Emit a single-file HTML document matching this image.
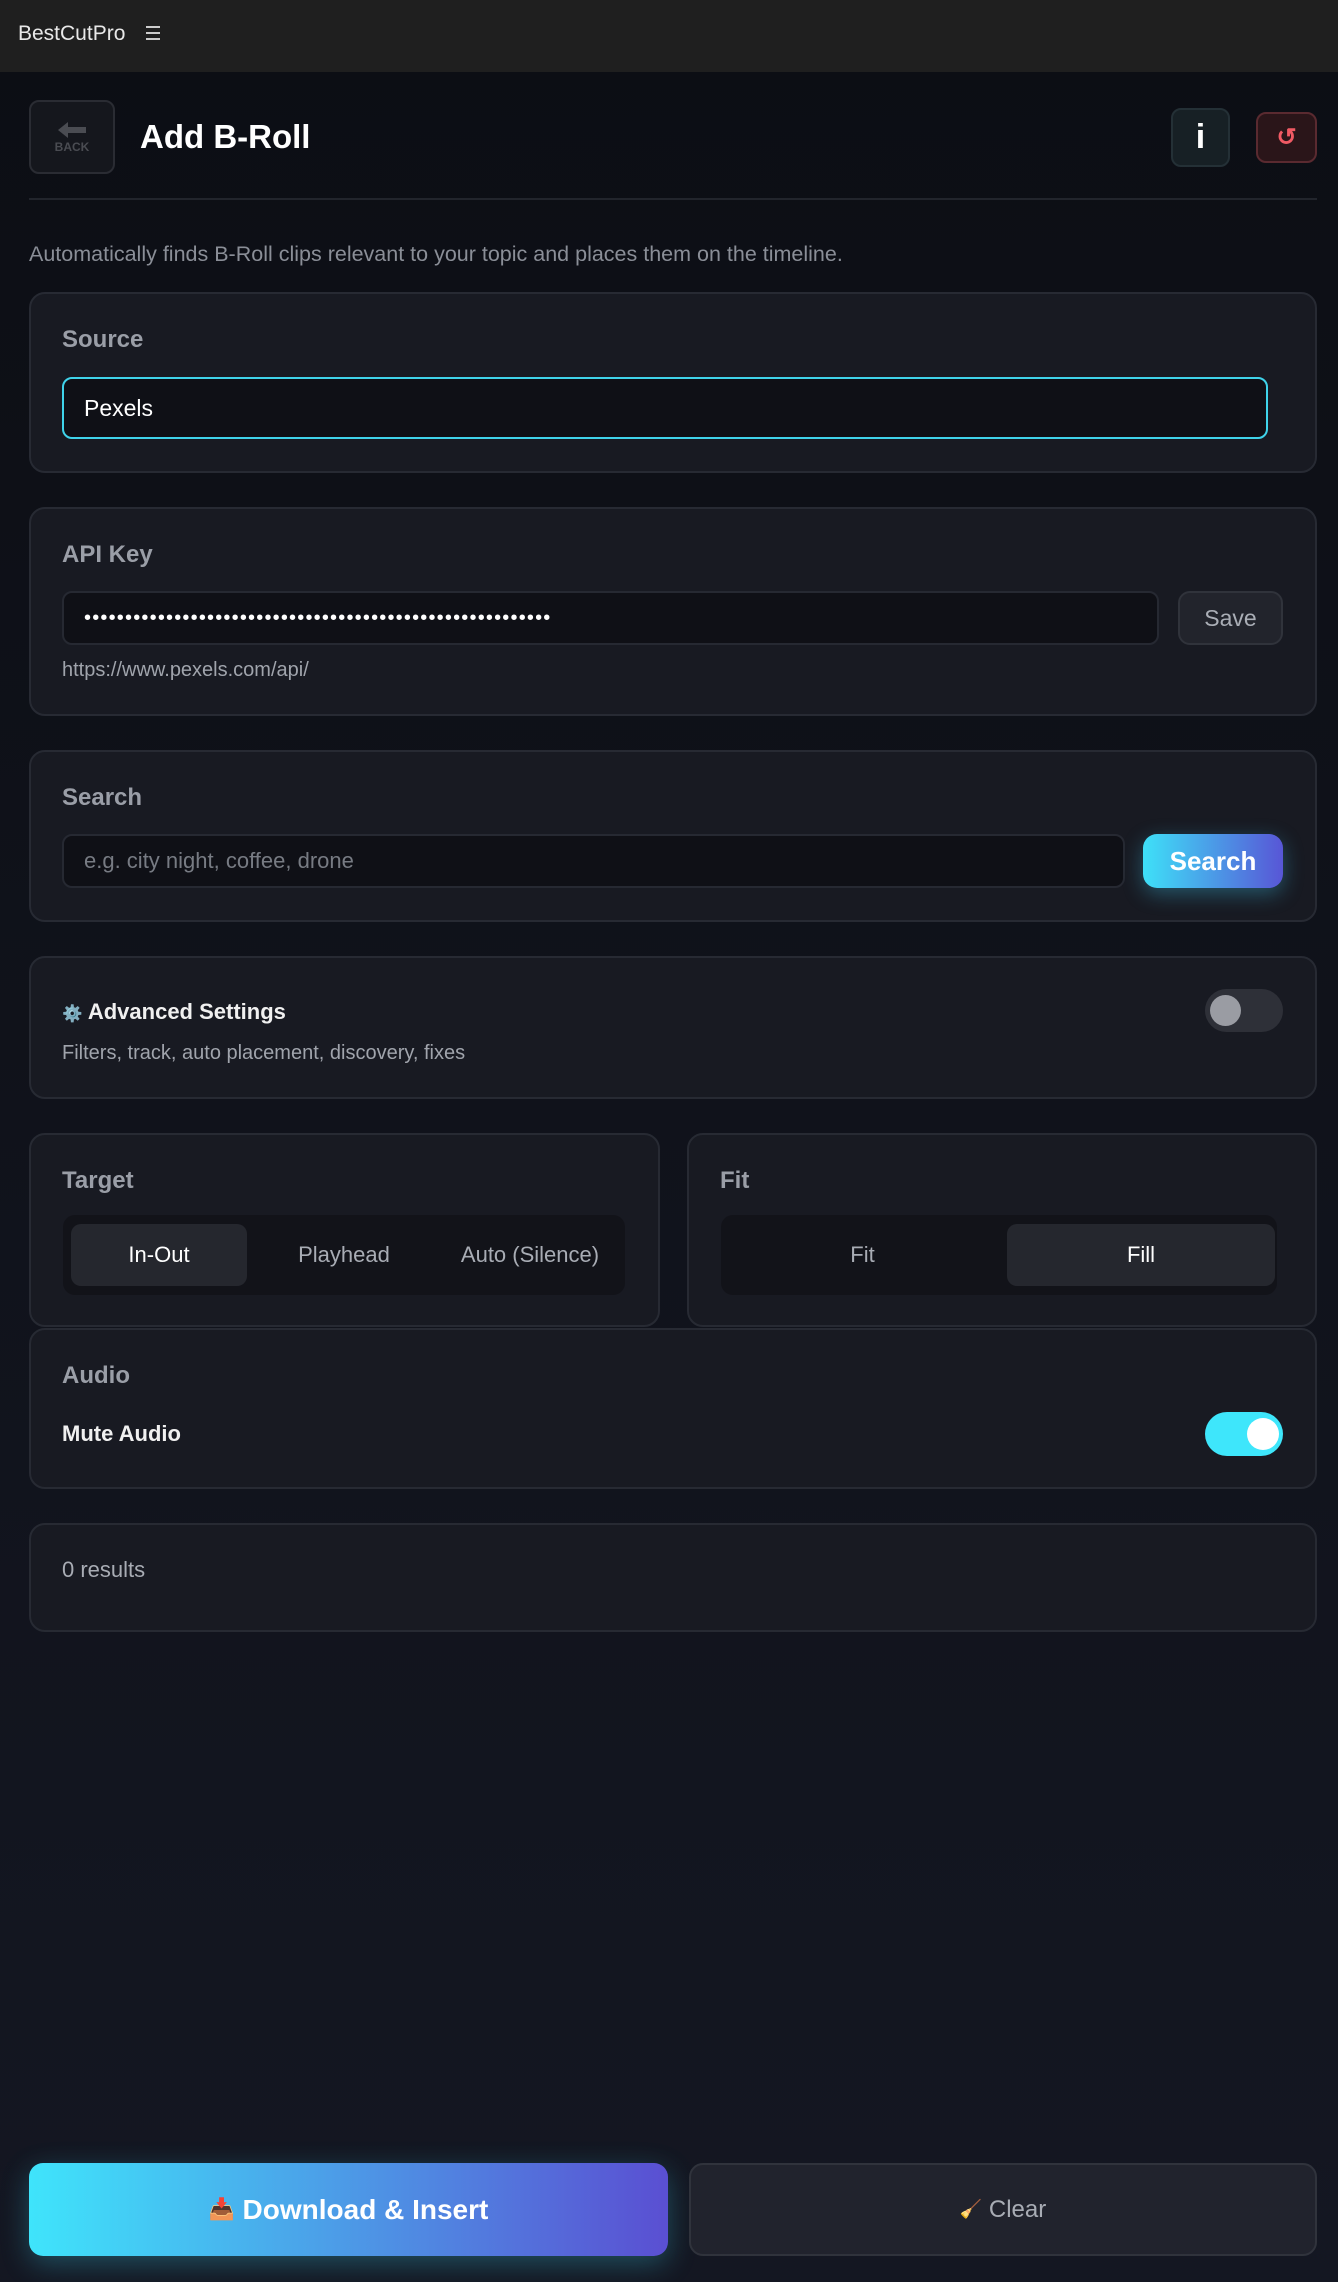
<!DOCTYPE html>
<html><head><meta charset="utf-8"><style>
*{box-sizing:border-box;margin:0;padding:0}
body{width:1338px;height:2282px;background:linear-gradient(#0c0e14,#141722);font-family:"Liberation Sans",sans-serif;position:relative;overflow:hidden;color:#fff}
.a{position:absolute}
.top{left:0;top:0;width:1338px;height:72px;background:#1f1f1f}
.card{position:absolute;background:#181a22;border:2px solid #272a33;border-radius:16px}
.lbl{position:absolute;color:#9a9ea7;font-size:24px;font-weight:bold;line-height:1}
.inp{position:absolute;background:#0f1016;border:2px solid #262932;border-radius:10px;font-size:22px;display:flex;align-items:center;padding-left:20px}
.fc{display:flex;align-items:center;justify-content:center}
.em{font-size:0.75em}
</style></head><body>
<div class="a top"></div>
<div class="a" style="left:18px;top:22px;font-size:21px;color:#e8e8e8">BestCutPro</div>
<div class="a" style="left:146px;top:26px;width:14px;height:14px;border-top:2px solid #ccc;border-bottom:2px solid #ccc"><div style="margin-top:4px;border-top:2px solid #ccc"></div></div>

<div class="a fc" style="left:29px;top:100px;width:86px;height:74px;border:2px solid #2a2c33;border-radius:10px;background:#15171d;flex-direction:column;color:#4a4c52;font-size:12px;font-weight:bold">
<svg width="32" height="20" viewBox="0 0 32 20"><path d="M2 10 L12 2 V7 H30 V13 H12 V18 Z" fill="#4a4c52"/></svg>BACK</div>
<div class="a" style="left:140px;top:118px;font-size:33px;font-weight:bold">Add B-Roll</div>
<div class="a fc" style="left:1171px;top:108px;width:59px;height:59px;background:#172025;border:2px solid #243036;border-radius:10px;font-size:34px;font-weight:bold">i</div>
<div class="a fc" style="left:1256px;top:112px;width:61px;height:51px;background:#2a1519;border:2px solid #5a2a30;border-radius:10px;color:#f05a64;font-size:24px;font-weight:bold">↺</div>
<div class="a" style="left:29px;top:198px;width:1288px;height:2px;background:#22252c"></div>
<div class="a" style="left:29px;top:242px;font-size:21.5px;color:#8a8e97">Automatically finds B-Roll clips relevant to your topic and places them on the timeline.</div>

<div class="card" style="left:29px;top:292px;width:1288px;height:181px"></div>
<div class="lbl" style="left:62px;top:328px">Source</div>
<div class="inp" style="left:62px;top:377px;width:1206px;height:62px;border-color:#3fd3ea;color:#fff;font-size:23px">Pexels</div>

<div class="card" style="left:29px;top:507px;width:1288px;height:209px"></div>
<div class="lbl" style="left:62px;top:543px">API Key</div>
<div class="inp" style="left:62px;top:591px;width:1097px;height:54px;color:#fff;font-size:20px;letter-spacing:1.2px">•••••••••••••••••••••••••••••••••••••••••••••••••••••••••</div>
<div class="a fc" style="left:1178px;top:591px;width:105px;height:54px;background:#22242c;border:2px solid #30333b;border-radius:12px;color:#aaaeb6;font-size:23px">Save</div>
<div class="a" style="left:62px;top:659px;font-size:20px;color:#a0a4ac">https://www.pexels.com/api/</div>

<div class="card" style="left:29px;top:750px;width:1288px;height:172px"></div>
<div class="lbl" style="left:62px;top:786px">Search</div>
<div class="inp" style="left:62px;top:834px;width:1063px;height:54px;color:#777b83">e.g. city night, coffee, drone</div>
<div class="a fc" style="left:1143px;top:834px;width:140px;height:54px;border-radius:14px;background:linear-gradient(90deg,#3ee0f8,#5856d6);font-size:26px;font-weight:bold;box-shadow:0 6px 20px rgba(62,200,240,.35)">Search</div>

<div class="card" style="left:29px;top:956px;width:1288px;height:143px"></div>
<div class="a" style="left:62px;top:999px;font-size:22px;font-weight:bold;color:#f0f0f0"><span class="em">⚙️</span> Advanced Settings</div>
<div class="a" style="left:62px;top:1042px;font-size:20px;color:#a0a4ac">Filters, track, auto placement, discovery, fixes</div>
<div class="a" style="left:1205px;top:989px;width:78px;height:43px;border-radius:22px;background:#2e3038"><div class="a" style="left:5px;top:6px;width:31px;height:31px;border-radius:50%;background:#9a9ca3"></div></div>

<div class="card" style="left:29px;top:1133px;width:631px;height:194px"></div>
<div class="lbl" style="left:62px;top:1169px">Target</div>
<div class="a" style="left:63px;top:1215px;width:562px;height:80px;background:#121319;border-radius:12px"></div>
<div class="a fc" style="left:71px;top:1224px;width:176px;height:62px;background:#25272e;border-radius:10px;font-size:22px">In-Out</div>
<div class="a fc" style="left:255px;top:1224px;width:178px;height:62px;font-size:22px;color:#a8acb4">Playhead</div>
<div class="a fc" style="left:440px;top:1224px;width:180px;height:62px;font-size:22px;color:#a8acb4">Auto (Silence)</div>

<div class="card" style="left:687px;top:1133px;width:630px;height:194px"></div>
<div class="lbl" style="left:720px;top:1169px">Fit</div>
<div class="a" style="left:721px;top:1215px;width:556px;height:80px;background:#121319;border-radius:12px"></div>
<div class="a fc" style="left:725px;top:1224px;width:275px;height:62px;font-size:22px;color:#a8acb4">Fit</div>
<div class="a fc" style="left:1007px;top:1224px;width:268px;height:62px;background:#25272e;border-radius:10px;font-size:22px">Fill</div>

<div class="card" style="left:29px;top:1328px;width:1288px;height:161px"></div>
<div class="lbl" style="left:62px;top:1364px">Audio</div>
<div class="a" style="left:62px;top:1421px;font-size:22px;font-weight:bold;color:#f0f0f0">Mute Audio</div>
<div class="a" style="left:1205px;top:1412px;width:78px;height:44px;border-radius:22px;background:#3ee6fb"><div class="a" style="left:42px;top:6px;width:32px;height:32px;border-radius:50%;background:#fff"></div></div>

<div class="card" style="left:29px;top:1523px;width:1288px;height:109px"></div>
<div class="a" style="left:62px;top:1557px;font-size:22px;color:#a8acb4">0 results</div>

<div class="a fc" style="left:29px;top:2163px;width:639px;height:93px;border-radius:14px;background:linear-gradient(90deg,#3fe4fb,#5a4fd2);font-size:28px;font-weight:bold;box-shadow:0 8px 28px rgba(60,210,240,.3)"><span class="em">📥</span>&nbsp;Download &amp; Insert</div>
<div class="a fc" style="left:689px;top:2163px;width:628px;height:93px;border-radius:14px;background:#21232d;border:2px solid #30333c;font-size:24px;color:#a8acb4"><span class="em">🧹</span>&nbsp;Clear</div>
</body></html>
